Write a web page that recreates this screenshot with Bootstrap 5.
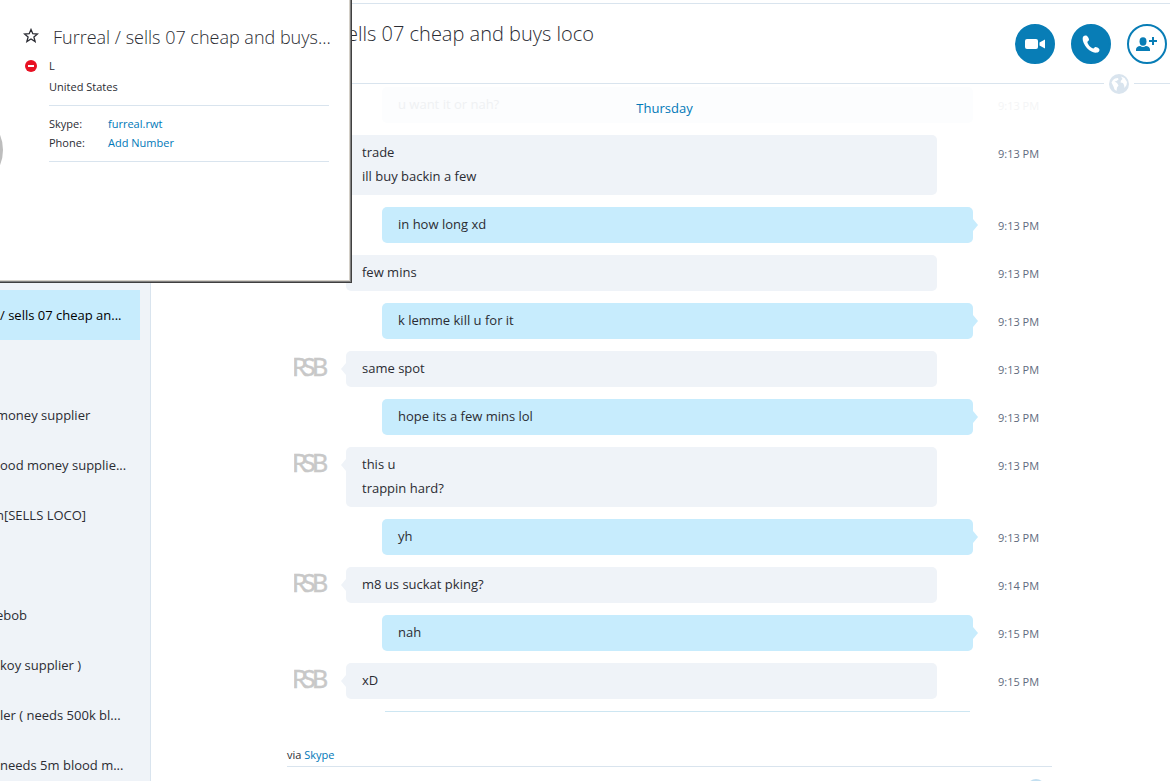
<!DOCTYPE html>
<html lang="en">
<head>
<meta charset="utf-8">
<meta name="viewport" content="width=device-width, initial-scale=1">
<title>Skype conversation</title>
<link rel="stylesheet" href="https://cdn.jsdelivr.net/npm/bootstrap@5.3.0/dist/css/bootstrap.min.css">
<style>
  :root { --sky: #c7ecfd; --mist: #eff3f8; --rule: #d9e4ee; --blue: #0078b8; --ink: #2b2c33; }
  body { font-family: "Open Sans", "Noto Sans", sans-serif; font-size: 13px; line-height: 24px; color: var(--ink); background: #fff; }
  a { color: var(--blue); text-decoration: none; }
  .light-title { font-weight: 300; line-height: 28px; white-space: nowrap; }
  .chat-head .light-title { font-size: 20px; }
  .card-pop .light-title { font-size: 18px; }
  .contacts { width: 151px; padding-top: 290px; background: var(--mist); border-right: 1px solid var(--rule); }
  .contacts a { display: block; height: 50px; line-height: 50px; margin-right: 10px; color: var(--ink); white-space: nowrap; }
  .contacts a.current { background: var(--sky); color: #000; }
  .contacts a.clipped { text-indent: -4px; }
  .chat-head { margin-top: 3px; height: 81px; border-top: 1px solid var(--rule); border-bottom: 1px solid var(--rule); padding: 16px 3px 0 196px; }
  .round-btn { width: 40px; height: 40px; margin-top: 4px; border-radius: 50%; border: 2px solid #087db6; background: #087db6; color: #fff; padding: 0; }
  .round-btn.hollow { background: #fff; color: #087db6; }
  .globe { right: 36px; top: 74px; width: 30px; height: 20px; background: #fff; }
  .thread { gap: 12px; padding: 3px 118px 0 136px; }
  .face { width: 59px; padding: 5px 0 0 7px; }
  .bubble { position: relative; padding: 5px 16px 7px; border-radius: 5px; }
  .bubble.theirs { background: var(--mist); margin-right: 36px; }
  .bubble.mine { background: var(--sky); margin-left: 36px; }
  .bubble::after { content: ""; position: absolute; top: 12px; width: 5px; height: 12px; background: inherit; }
  .bubble.theirs::after { right: 100%; clip-path: polygon(100% 0, 0 50%, 100% 100%); }
  .bubble.mine::after { left: 100%; clip-path: polygon(0 0, 100% 50%, 0 100%); }
  .stamp { width: 79px; padding: 7px 0 0 25px; font-size: 11px; color: #5f6b7e; white-space: nowrap; }
  .faded .bubble { background: #fcfdfe; color: #eff1f3; }
  .faded .bubble::after { display: none; }
  .faded .stamp { color: #f4f5f6; }
  .day { padding: 12px 0 0 8px; color: var(--blue); }
  .next-edge { height: 1px; margin: 0 82px 0 98px; background: #cde6f2; }
  .via { margin: 32px 118px 0 136px; font-size: 11px; line-height: 22px; border-bottom: 1px solid var(--rule); }
  .smiley { margin: 12px 7px 0 0; width: 18px; height: 18px; border-radius: 50%; background: #c3dff0; }
  .foot { padding-right: 118px; }
  .card-pop { width: 352px; height: 283px; padding: 23px 23px 0 49px; font-size: 11px; background: #fff; overflow: hidden;
    box-shadow: inset -1px -1px #404040, inset -2px -2px #808080, inset -3px -3px #d4d0c8; }
  .card-pop .fact { line-height: 19px; }
  .card-pop .fact dt { width: 59px; font-weight: 400; }
  .star { left: 23px; top: 28px; }
  .busy { left: 25px; top: 60px; }
  .photo { left: -75px; top: 111px; width: 78px; height: 78px; border-radius: 50%; border: 4px solid #bdbdbd; }
  .about { margin-top: 4px; line-height: 21px; }
  .facts { border: solid var(--rule); border-width: 1px 0; padding: 8px 0 9px; margin-top: 8px; }
</style>
</head>
<body>
<svg class="d-none" aria-hidden="true">
  <symbol id="rsb" viewBox="0 0 34 22">
    <g font-family="Lato, sans-serif" font-size="25" fill="#c8c8c8" stroke="#c8c8c8" stroke-width=".4"><text x="-2" y="20">R</text><text x="8" y="20">S</text><text x="18" y="20">B</text></g>
  </symbol>
</svg>
<div class="d-flex vh-100 overflow-hidden position-relative">
  <nav class="contacts flex-shrink-0 overflow-hidden" aria-label="Contacts">
    <a href="#" class="current">/ sells 07 cheap an...</a>
    <a href="#" aria-label="Contact"></a>
    <a href="#" class="clipped">money supplier</a>
    <a href="#">ood money supplie...</a>
    <a href="#" class="clipped">n[SELLS LOCO]</a>
    <a href="#" aria-label="Contact"></a>
    <a href="#" class="clipped">ebob</a>
    <a href="#">koy supplier )</a>
    <a href="#">ler ( needs 500k bl...</a>
    <a href="#">needs 5m blood m...</a>
  </nav>
  <main class="flex-grow-1 position-relative">
    <header class="chat-head d-flex justify-content-between align-items-start">
      <h1 class="light-title mb-0">ells 07 cheap and buys loco</h1>
      <div class="d-flex gap-3">
        <button class="round-btn" aria-label="Video call"><svg class="d-block mx-auto" width="20" height="12" viewBox="0 0 20 12" fill="currentColor"><rect x="0" y="1" width="13" height="10" rx="2"/><path d="M14.500 4.500 20 1.500v9L14.500 7.500z"/></svg></button>
        <button class="round-btn" aria-label="Call"><svg class="d-block mx-auto" width="18" height="18" viewBox="0 0 18 18" fill="currentColor"><path d="M1.500 1.200C.3 2.500.4 5 1.700 8c1.700 4 4.500 7 8.300 8.800 3 1.400 5.600 1.300 7-.2.6-.7.600-2.300 0-2.900-.9-.9-2.400-1.700-3.600-1.600-1 .1-1.300 1.500-2.300 1.300C8.500 12.800 5.800 9.500 5.400 7.200 5.300 6.200 7 5.900 7 4.800 7 3.500 6 1.800 5 .9 4.200.3 2.200.4 1.500 1.200z"/></svg></button>
        <button class="round-btn hollow" aria-label="Add people"><svg class="d-block mx-auto" width="22" height="16" viewBox="0 0 22 16" fill="currentColor"><ellipse cx="7" cy="5.500" rx="3.500" ry="4.200"/><path d="M0 15v-1.500C0 11 2 10.300 4.200 10c1.800 1.200 3.800 1.200 5.600 0 2.200.3 4.200 1 4.200 3.500V15zM16 1h2v3h3v2h-3v3h-2V6h-3V4h3z"/></svg></button>
      </div>
    </header>
    <div class="globe position-absolute d-flex justify-content-center"><svg width="20" height="20" viewBox="0 0 20 20"><circle cx="10" cy="10" r="10" fill="#d9e4ee"/><path fill="#fff" d="M2.500 8.500 4 6l2-1.500L9 4l.5 1.500L7.500 7l-2 .5L8 9l1.500 2.500-1.500 2L7.500 17 5.500 15.500 4.500 12.500zM12 2.500l3.500 1.500 2.500 4-.5 3-2 3-.500-3-1-2-2.500-.500.500-2 1.500-1.500z"/></svg></div>
    <div class="thread d-flex flex-column position-relative">
      <div class="day position-absolute start-0 end-0 top-0 z-1 text-center">Thursday</div>
      <div class="d-flex faded"><div class="face"></div><div class="flex-grow-1"><div class="bubble mine">u want it or nah?</div></div><time class="stamp">9:13 PM</time></div>
      <div class="d-flex"><div class="face"></div><div class="flex-grow-1"><div class="bubble theirs">trade<br>ill buy backin a few</div></div><time class="stamp">9:13 PM</time></div>
      <div class="d-flex"><div class="face"></div><div class="flex-grow-1"><div class="bubble mine">in how long xd</div></div><time class="stamp">9:13 PM</time></div>
      <div class="d-flex"><div class="face"></div><div class="flex-grow-1"><div class="bubble theirs">few mins</div></div><time class="stamp">9:13 PM</time></div>
      <div class="d-flex"><div class="face"></div><div class="flex-grow-1"><div class="bubble mine">k lemme kill u for it</div></div><time class="stamp">9:13 PM</time></div>
      <div class="d-flex"><div class="face"><svg class="d-block" width="34" height="22"><use href="#rsb"/></svg></div><div class="flex-grow-1"><div class="bubble theirs">same spot</div></div><time class="stamp">9:13 PM</time></div>
      <div class="d-flex"><div class="face"></div><div class="flex-grow-1"><div class="bubble mine">hope its a few mins lol</div></div><time class="stamp">9:13 PM</time></div>
      <div class="d-flex"><div class="face"><svg class="d-block" width="34" height="22"><use href="#rsb"/></svg></div><div class="flex-grow-1"><div class="bubble theirs">this u<br>trappin hard?</div></div><time class="stamp">9:13 PM</time></div>
      <div class="d-flex"><div class="face"></div><div class="flex-grow-1"><div class="bubble mine">yh</div></div><time class="stamp">9:13 PM</time></div>
      <div class="d-flex"><div class="face"><svg class="d-block" width="34" height="22"><use href="#rsb"/></svg></div><div class="flex-grow-1"><div class="bubble theirs">m8 us suckat pking?</div></div><time class="stamp">9:14 PM</time></div>
      <div class="d-flex"><div class="face"></div><div class="flex-grow-1"><div class="bubble mine">nah</div></div><time class="stamp">9:15 PM</time></div>
      <div class="d-flex"><div class="face"><svg class="d-block" width="34" height="22"><use href="#rsb"/></svg></div><div class="flex-grow-1"><div class="bubble theirs">xD</div></div><time class="stamp">9:15 PM</time></div>
      <div class="next-edge"></div>
    </div>
    <div class="via">via <a href="#">Skype</a></div>
    <div class="foot d-flex justify-content-end"><div class="smiley"></div></div>
  </main>
  <aside class="card-pop position-absolute top-0 start-0 z-2" aria-label="Contact details">
    <div class="photo position-absolute"></div>
    <svg class="star position-absolute" width="16" height="15" viewBox="0 0 16 15" fill="none" stroke="#2b2c33" stroke-width="1.300"><path d="m8 1.500 1.800 4.200 4.700.3-3.600 3 1.200 4.500L8 11l-4.100 2.500 1.200-4.500-3.600-3 4.700-.3z"/></svg>
    <svg class="busy position-absolute" width="12" height="12" viewBox="0 0 12 12"><circle cx="6" cy="6" r="6" fill="#e81123"/><path d="M3 5h6v2H3z" fill="#fff"/></svg>
    <h2 class="light-title mb-0 ps-1">Furreal / sells 07 cheap and buys...</h2>
    <div class="about"><div>L</div><div>United States</div></div>
    <dl class="facts mb-0">
      <div class="fact d-flex"><dt>Skype:</dt><dd class="mb-0"><a href="#">furreal.rwt</a></dd></div>
      <div class="fact d-flex"><dt>Phone:</dt><dd class="mb-0"><a href="#">Add Number</a></dd></div>
    </dl>
  </aside>
</div>
<script src="https://cdn.jsdelivr.net/npm/bootstrap@5.3.0/dist/js/bootstrap.bundle.min.js"></script>
</body>
</html>
